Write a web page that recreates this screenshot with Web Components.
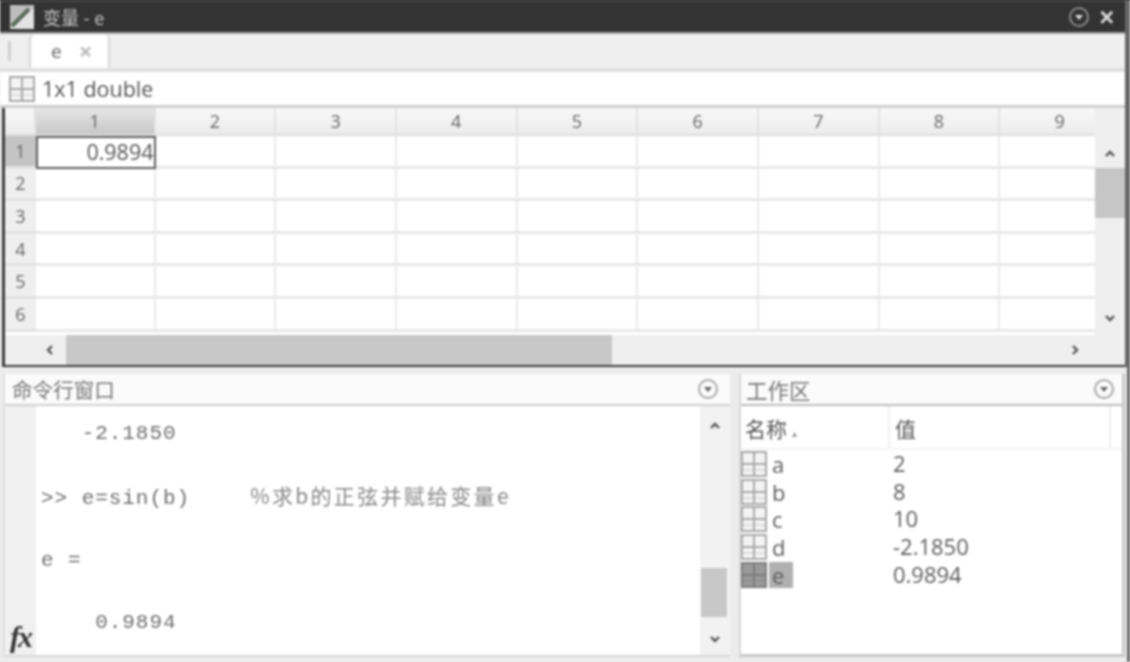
<!DOCTYPE html>
<html>
<head>
<meta charset="utf-8">
<title>变量 - e</title>
<style>
  html, body { margin: 0; padding: 0; background: #ececec; }
  body { width: 1130px; height: 662px; overflow: hidden; }
</style>
</head>
<body>
<matlab-desktop></matlab-desktop>

<script>
const UI_FONT = `"Open Sans", "Noto Sans", "Noto Sans CJK SC", sans-serif`;

class GridIcon extends HTMLElement {
  constructor() {
    super();
    const on = this.hasAttribute('selected');
    const bg = on ? '#9a9a9a' : '#f4f4f4';
    const line = on ? '#7c7c7c' : '#a8a8a8';
    this.attachShadow({ mode: 'open' }).innerHTML = `
      <style>
        :host { display: inline-block; width: 26px; height: 26px; flex: none; }
        svg { display: block; }
      </style>
      <svg width="26" height="26" viewBox="0 0 26 26">
        <rect x="1" y="1" width="24" height="24" fill="${bg}" stroke="${line}" stroke-width="2"/>
        <path d="M13 1V25M1 13H25" stroke="${line}" stroke-width="2"/>
        <path d="M1 19H25" stroke="${line}" stroke-width="1" opacity=".6"/>
      </svg>`;
  }
}
customElements.define('grid-icon', GridIcon);

class MenuButton extends HTMLElement {
  constructor() {
    super();
    const c = this.getAttribute('color') || '#a8a8a8';
    this.attachShadow({ mode: 'open' }).innerHTML = `
      <style>
        :host { display: block; width: 22px; height: 22px; flex: none; }
        svg { display: block; }
      </style>
      <svg width="22" height="22" viewBox="0 0 22 22">
        <circle cx="11" cy="11" r="9" fill="none" stroke="${c}" stroke-width="2"/>
        <path d="M7 9H15L11 14Z" fill="${this.getAttribute('arrow') || '#666'}"/>
      </svg>`;
  }
}
customElements.define('menu-button', MenuButton);

class ChevronIcon extends HTMLElement {
  constructor() {
    super();
    const paths = {
      up: 'M3 10L7 6L11 10',
      down: 'M3 5L7 9L11 5',
      left: 'M9 3L5 7L9 11',
      right: 'M5 3L9 7L5 11'
    };
    this.attachShadow({ mode: 'open' }).innerHTML = `
      <style>
        :host { display: block; width: 14px; height: 14px; flex: none; }
        svg { display: block; }
      </style>
      <svg width="14" height="14" viewBox="0 0 14 14">
        <path d="${paths[this.getAttribute('dir')]}" fill="none" stroke="#555" stroke-width="2.4"/>
      </svg>`;
  }
}
customElements.define('chevron-icon', ChevronIcon);

class TitleBar extends HTMLElement {
  constructor() {
    super();
    this.attachShadow({ mode: 'open' }).innerHTML = `
      <style>
        :host {
          display: flex; align-items: center; height: 32px; box-sizing: border-box;
          background: #333; border-top: 2px solid #444; color: #c4c4c4;
          font: 18px ${UI_FONT}; padding: 0 11px 0 10px;
        }
        svg { display: block; margin-right: 9px; }
        .name { flex: 1; }
        .close { margin-left: 9px; font: bold 25px/20px "Liberation Sans", sans-serif; color: #dcdcdc; }
      </style>
      <svg width="24" height="24" viewBox="0 0 24 24">
        <rect width="24" height="24" fill="#bdbdbd"/>
        <path d="M0 24L24 2V24Z" fill="#e2e2e2"/>
        <path d="M2 21L19 4" stroke="#5e6a5e" stroke-width="4"/>
      </svg>
      <span class="name">变量 - e</span>
      <menu-button color="#8a8a8a" arrow="#ddd"></menu-button>
      <span class="close">×</span>`;
  }
}
customElements.define('title-bar', TitleBar);

class TabStrip extends HTMLElement {
  constructor() {
    super();
    this.attachShadow({ mode: 'open' }).innerHTML = `
      <style>
        :host {
          display: flex; height: 40px; box-sizing: border-box; background: #efefef;
          border-top: 2px solid #a4a4a4; border-bottom: 4px solid #e0e0e0;
          font: 19px ${UI_FONT}; color: #666;
        }
        .grip { width: 3px; height: 20px; margin: 7px 0 0 8px; background: #d0d0d0; }
        .tab {
          display: flex; align-items: center; box-sizing: border-box; gap: 17px;
          width: 81px; height: 34px; margin-left: 18px; padding-left: 20px;
          background: #fff; border-left: 2px solid #d4d4d4; border-right: 2px solid #d4d4d4;
          border-radius: 6px 6px 0 0;
        }
        .x { color: #bcbcbc; font-weight: bold; font-size: 24px; line-height: 20px; }
      </style>
      <div class="grip"></div>
      <div class="tab"><span>e</span><span class="x">×</span></div>`;
  }
}
customElements.define('tab-strip', TabStrip);

class InfoRow extends HTMLElement {
  constructor() {
    super();
    this.attachShadow({ mode: 'open' }).innerHTML = `
      <style>
        :host {
          display: flex; align-items: center; gap: 7px; height: 36px; box-sizing: border-box;
          background: #fff; border-bottom: 3px solid #cfcfcf; padding-left: 9px;
          font: 21.5px ${UI_FONT}; color: #555;
        }
      </style>
      <grid-icon></grid-icon><span>1x1 double</span>`;
  }
}
customElements.define('info-row', InfoRow);

class VarTable extends HTMLElement {
  constructor() {
    super();
    const cols = [1, 2, 3, 4, 5, 6, 7, 8, 9];
    const rows = [1, 2, 3, 4, 5, 6];
    const head = cols.map(c => `<div class="ch ${c === 1 ? 'on' : ''}">${c}</div>`).join('');
    const body = rows.map(r =>
      `<div class="rh ${r === 1 ? 'on' : ''}">${r}</div>` +
      cols.map(c => (r === 1 && c === 1)
        ? `<div class="cell sel">0.9894</div>`
        : `<div class="cell"></div>`).join('')
    ).join('');
    this.attachShadow({ mode: 'open' }).innerHTML = `
      <style>
        :host {
          display: grid; box-sizing: border-box; height: 259px; background: #efefef;
          margin-left: 2px;
          border-left: 3px solid #3c3c3c;
          border-bottom: 2px solid #3c3c3c;
          grid-template-columns: 1fr 30px; grid-template-rows: 227px 30px;
          font: 18px ${UI_FONT}; color: #666;
        }
        .sheet {
          display: grid; overflow: hidden; background: #fff;
          grid-template-columns: 31px 119.5px repeat(8, 120.7px);
          grid-template-rows: 28px repeat(6, 32.6px);
        }
        .ch, .rh { display: flex; align-items: center; justify-content: center; box-sizing: border-box; }
        .ch { background: linear-gradient(#f8f8f8, #ececec); border-right: 2px solid #e2e2e2; border-bottom: 2px solid #dedede; }
        .ch.on { background: linear-gradient(#e6e6e6, #c8c8c8); }
        .rh { background: #efefef; border-bottom: 3px solid #e2e2e2; }
        .rh.on { background: #c4c4c4; }
        .cell { box-sizing: border-box; border-right: 2px solid #eaeaea; border-bottom: 3px solid #e8e8e8; }
        .sel {
          border: 2px solid #5c5c5c; color: #555; text-align: right; line-height: 28px;
          font-size: 21.5px; white-space: nowrap;
        }
        .vbar { display: flex; flex-direction: column; align-items: center; justify-content: space-between; padding: 38px 0 10px; box-sizing: border-box; position: relative; }
        .vbar i { position: absolute; left: 0; top: 60px; width: 100%; height: 50px; background: #c6c6c6; }
        .hbar { grid-column: 1 / 3; display: flex; align-items: center; justify-content: space-between; padding: 0 43px 0 38px; position: relative; }
        .hbar i { position: absolute; left: 61px; width: 546px; top: 0; bottom: 0; background: #c8c8c8; }
      </style>
      <div class="sheet">
        <div class="ch"></div>${head}${body}
      </div>
      <div class="vbar"><chevron-icon dir="up"></chevron-icon><i></i><chevron-icon dir="down"></chevron-icon></div>
      <div class="hbar"><chevron-icon dir="left"></chevron-icon><i></i><chevron-icon dir="right"></chevron-icon></div>`;
  }
}
customElements.define('var-table', VarTable);

class PanelHeader extends HTMLElement {
  constructor() {
    super();
    this.attachShadow({ mode: 'open' }).innerHTML = `
      <style>
        :host {
          display: flex; align-items: center; justify-content: space-between; flex: none;
          height: 32px; box-sizing: border-box; padding: 0 11px 0 7px;
          border-bottom: 2px solid #d0d0d0; background: #fbfbfb;
          font: 20.6px ${UI_FONT}; color: #777;
        }
      </style>
      <slot></slot><menu-button></menu-button>`;
  }
}
customElements.define('panel-header', PanelHeader);

class CommandPanel extends HTMLElement {
  constructor() {
    super();
    this.attachShadow({ mode: 'open' }).innerHTML = `
      <style>
        :host {
          display: flex; flex-direction: column; width: 727px; flex: none;
          background: #fff; border-left: 2px solid #e0e0e0;
          border-bottom: 2px solid #d8d8d8; box-sizing: border-box;
        }
        .body { flex: 1; display: grid; grid-template-columns: 31px 1fr 30px; min-height: 0; }
        .gutter { background: #f0f0f0; display: flex; align-items: flex-end; padding: 0 0 3px 5px; box-sizing: border-box; }
        .fx { font: italic bold 30px/30px "Liberation Serif", serif; color: #333; letter-spacing: -2px; }
        pre {
          margin: 0; padding: 12px 0 0 5px; color: #6e6e6e; overflow: hidden;
          font: 21px/31px "Liberation Mono", monospace; letter-spacing: .95px;
        }
        pre span { font: 21px/31px "Noto Sans CJK SC", sans-serif; letter-spacing: 2.3px; color: #888; margin-left: 6px; }
        .vbar { background: #f2f2f2; position: relative; display: flex; flex-direction: column; justify-content: space-between; align-items: center; padding: 12px 0 9px; box-sizing: border-box; }
        .vbar i { position: absolute; left: 1px; right: 3px; top: 162px; height: 49px; background: #c8c8c8; }
      </style>
      <panel-header>命令行窗口</panel-header>
      <div class="body">
        <div class="gutter"><span class="fx">fx</span></div>
<pre>   -2.1850

>> e=sin(b)    <span>%求b的正弦并赋给变量e</span>

e =

    0.9894</pre>
        <div class="vbar"><chevron-icon dir="up"></chevron-icon><i></i><chevron-icon dir="down"></chevron-icon></div>
      </div>`;
  }
}
customElements.define('command-panel', CommandPanel);

class WorkspacePanel extends HTMLElement {
  constructor() {
    super();
    const vars = [['a', '2'], ['b', '8'], ['c', '10'], ['d', '-2.1850'], ['e', '0.9894']];
    const rows = vars.map(([n, v]) => {
      const on = n === 'e';
      return `<div class="row"><span class="n"><grid-icon ${on ? 'selected' : ''}></grid-icon><b class="${on ? 'on' : ''}">${n}</b></span><span>${v}</span></div>`;
    }).join('');
    this.attachShadow({ mode: 'open' }).innerHTML = `
      <style>
        :host {
          display: flex; flex-direction: column; width: 386px; flex: none;
          background: #fff; border-left: 2px solid #d8d8d8;
          border-right: 3px solid #c8c8c8; border-bottom: 3px solid #c8c8c8; box-sizing: border-box;
          font: 22px ${UI_FONT}; color: #5c5c5c;
        }
        panel-header { border-bottom-color: #bcbcbc; padding-right: 7px; padding-left: 5px; font-size: 21.5px; }
        .head { display: grid; grid-template-columns: 147px 1fr; height: 42px; align-items: center; font: 21px "Noto Sans CJK SC", sans-serif; color: #555; flex: none; }
        .head span { padding-left: 4px; }
        .head small { font-size: 10px; color: #999; }
        .head span + span { border-left: 2px solid #f0f0f0; height: 100%; line-height: 44px; padding-left: 5px; box-sizing: border-box; border-right: 2px solid #f0f0f0; margin-right: 11px; }
        .list { border-top: 2px solid #f4f4f4; }
        .row { display: grid; grid-template-columns: 152px 1fr; height: 27.7px; line-height: 27px; }
        .n { display: flex; align-items: center; gap: 2px; }
        b { font-weight: normal; padding: 0 3px; line-height: 26px; height: 26px; }
        b.on { background: #b0b0b0; width: 24px; box-sizing: border-box; }
      </style>
      <panel-header>工作区</panel-header>
      <div class="head"><span>名称 <small>▴</small></span><span>值</span></div>
      <div class="list">${rows}</div>`;
  }
}
customElements.define('workspace-panel', WorkspacePanel);

class MatlabDesktop extends HTMLElement {
  constructor() {
    super();
    this.attachShadow({ mode: 'open' }).innerHTML = `
      <style>
        /* 3px bleed all round so the blur doesn't fade at the window edge */
        :host {
          display: block; width: 1130px; height: 662px; overflow: hidden; filter: blur(1px);
          margin: -3px; padding: 3px;
          background: linear-gradient(#333 0 3px, #ececec 3px);
        }
        .win { width: 1130px; display: flex; flex-direction: column; box-sizing: border-box; border-right: 5px solid #666; }
        .lower {
          display: flex; gap: 9px; width: 1130px; height: 295px; padding: 7px 0 5px 3px;
          box-sizing: border-box; border-right: 3px solid #666;
        }
      </style>
      <div class="win">
        <title-bar></title-bar>
        <tab-strip></tab-strip>
        <info-row></info-row>
        <var-table></var-table>
      </div>
      <div class="lower">
        <command-panel></command-panel>
        <workspace-panel></workspace-panel>
      </div>`;
  }
}
customElements.define('matlab-desktop', MatlabDesktop);
</script>
</body>
</html>
